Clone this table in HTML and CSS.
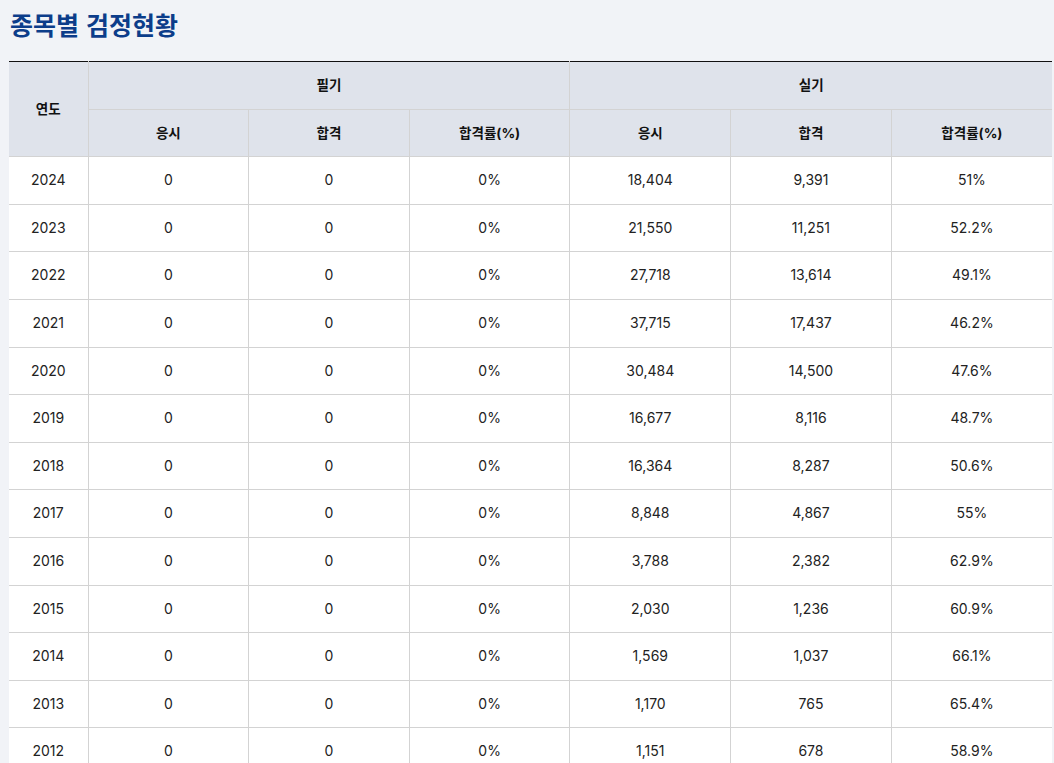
FILE: index.html
```html
<!DOCTYPE html>
<html lang="ko">
<head>
<meta charset="utf-8">
<title>종목별 검정현황</title>
<link rel="stylesheet" href="styles.css">
</head>
<body>
<div class="page">
  <h1 class="title">종목별 검정현황</h1>
  <table class="stats">
    <colgroup>
      <col class="col-year">
      <col><col><col><col><col><col>
    </colgroup>
    <thead>
      <tr>
        <th rowspan="2">연도</th>
        <th colspan="3">필기</th>
        <th colspan="3">실기</th>
      </tr>
      <tr>
        <th>응시</th><th>합격</th><th>합격률(%)</th>
        <th>응시</th><th>합격</th><th>합격률(%)</th>
      </tr>
    </thead>
    <tbody>
      <tr><td>2024</td><td>0</td><td>0</td><td>0%</td><td>18,404</td><td>9,391</td><td>51%</td></tr>
      <tr><td>2023</td><td>0</td><td>0</td><td>0%</td><td>21,550</td><td>11,251</td><td>52.2%</td></tr>
      <tr><td>2022</td><td>0</td><td>0</td><td>0%</td><td>27,718</td><td>13,614</td><td>49.1%</td></tr>
      <tr><td>2021</td><td>0</td><td>0</td><td>0%</td><td>37,715</td><td>17,437</td><td>46.2%</td></tr>
      <tr><td>2020</td><td>0</td><td>0</td><td>0%</td><td>30,484</td><td>14,500</td><td>47.6%</td></tr>
      <tr><td>2019</td><td>0</td><td>0</td><td>0%</td><td>16,677</td><td>8,116</td><td>48.7%</td></tr>
      <tr><td>2018</td><td>0</td><td>0</td><td>0%</td><td>16,364</td><td>8,287</td><td>50.6%</td></tr>
      <tr><td>2017</td><td>0</td><td>0</td><td>0%</td><td>8,848</td><td>4,867</td><td>55%</td></tr>
      <tr><td>2016</td><td>0</td><td>0</td><td>0%</td><td>3,788</td><td>2,382</td><td>62.9%</td></tr>
      <tr><td>2015</td><td>0</td><td>0</td><td>0%</td><td>2,030</td><td>1,236</td><td>60.9%</td></tr>
      <tr><td>2014</td><td>0</td><td>0</td><td>0%</td><td>1,569</td><td>1,037</td><td>66.1%</td></tr>
      <tr><td>2013</td><td>0</td><td>0</td><td>0%</td><td>1,170</td><td>765</td><td>65.4%</td></tr>
      <tr><td>2012</td><td>0</td><td>0</td><td>0%</td><td>1,151</td><td>678</td><td>58.9%</td></tr>
    </tbody>
  </table>
</div>
</body>
</html>
```

FILE: styles.css
```css
html, body {
  margin: 0;
  padding: 0;
  background: #f1f3f7;
}
body {
  font-family: Inter, "Noto Sans CJK KR", sans-serif;
  color: #222;
}
.page {
  padding: 7px 2px 0 9px;
}
.title {
  margin: 0 0 19px 1px;
  font-family: "Noto Sans CJK KR", sans-serif;
  font-size: 25px;
  font-weight: 700;
  line-height: 35px;
  color: #0c3d8a;
  letter-spacing: 0;
}
.stats {
  width: 100%;
  border-collapse: collapse;
  table-layout: fixed;
  border-top: 1px solid #111;
  background: #fff;
  font-size: 14px;
}
.col-year {
  width: 79px;
}
.stats th,
.stats td {
  border: 1px solid #d3d3d3;
  text-align: center;
  padding: 14px 4px;
  line-height: 18.6px;
}
.stats tr:first-child th {
  border-top: 1px solid #111;
}
.stats th {
  background: #dfe3eb;
  font-weight: 700;
  color: #111;
  font-size: 13.5px;
}
.stats td {
  color: #222;
}
.stats tr > :first-child {
  border-left: none;
}
.stats tr > :last-child {
  border-right: none;
}
```
